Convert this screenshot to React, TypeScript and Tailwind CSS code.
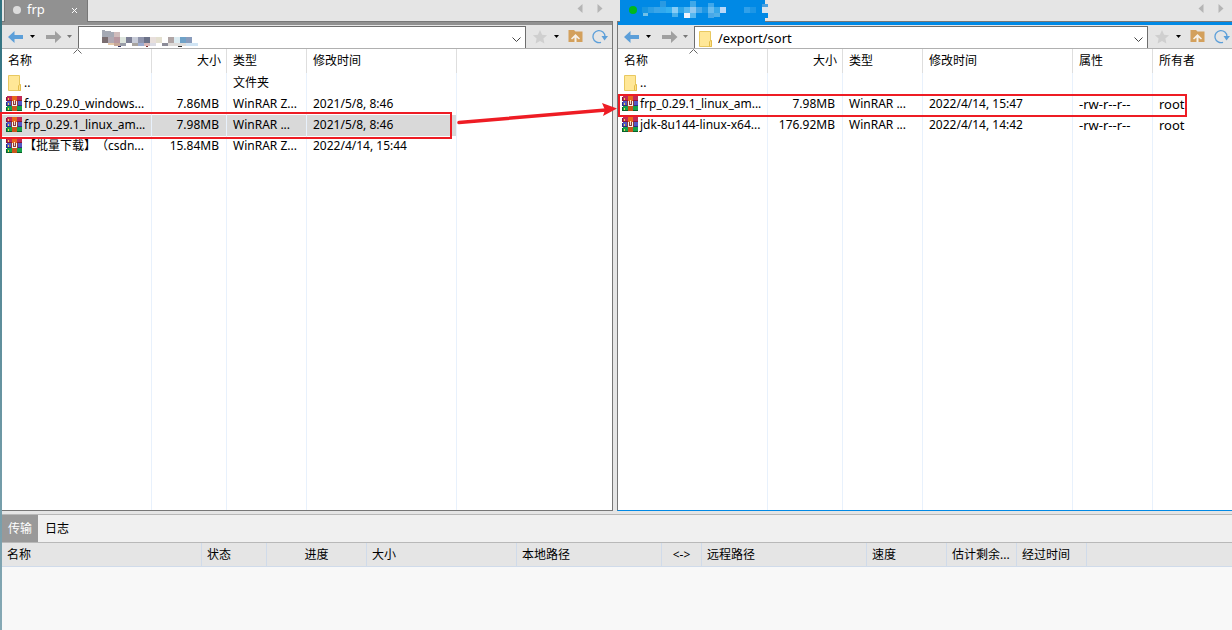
import clsx from "clsx";

interface FileRow {
    icon: "folder" | "archive"
    name: string
    size?: string
    type?: string
    modified?: string
    attrs?: string
    owner?: string
    selected?: boolean
}

type Block = [number, number, number, number, string];

const localFiles: FileRow[] = [
    { icon: "folder", name: "..", type: "文件夹" },
    { icon: "archive", name: "frp_0.29.0_windows...", size: "7.86MB", type: "WinRAR Z...", modified: "2021/5/8, 8:46" },
    { icon: "archive", name: "frp_0.29.1_linux_am...", size: "7.98MB", type: "WinRAR ...", modified: "2021/5/8, 8:46", selected: true },
    { icon: "archive", name: "【批量下载】（csdn...", size: "15.84MB", type: "WinRAR Z...", modified: "2022/4/14, 15:44" },
];

const remoteFiles: FileRow[] = [
    { icon: "folder", name: ".." },
    { icon: "archive", name: "frp_0.29.1_linux_am...", size: "7.98MB", type: "WinRAR ...", modified: "2022/4/14, 15:47", attrs: "-rw-r--r--", owner: "root" },
    { icon: "archive", name: "jdk-8u144-linux-x64...", size: "176.92MB", type: "WinRAR ...", modified: "2022/4/14, 14:42", attrs: "-rw-r--r--", owner: "root" },
];

const transferColumns = [
    { label: "名称", width: "w-[200px]" },
    { label: "状态", width: "w-[65px]" },
    { label: "进度", width: "w-[100px]", center: true },
    { label: "大小", width: "w-[150px]" },
    { label: "本地路径", width: "w-[145px]" },
    { label: "<->", width: "w-[40px]", center: true },
    { label: "远程路径", width: "w-[165px]" },
    { label: "速度", width: "w-[80px]" },
    { label: "估计剩余...", width: "w-[70px]" },
    { label: "经过时间", width: "w-[70px]" },
];

const pathBlocks: Block[] = [
    [0, 7, 6, 6, "#7a6d70"], [6, 7, 6, 6, "#b0a8b2"], [12, 7, 6, 6, "#b898a0"], [18, 7, 6, 6, "#dde5dd"],
    [24, 7, 6, 6, "#7c7f95"], [30, 7, 6, 6, "#c8ccd8"], [36, 7, 6, 6, "#9095ac"], [42, 7, 6, 6, "#6c7288"],
    [48, 7, 6, 6, "#e8dfdc"], [54, 7, 6, 6, "#e4e0d0"], [66, 7, 6, 6, "#b0a5a5"], [72, 7, 6, 6, "#dcecf2"],
    [78, 7, 6, 6, "#6fa2c8"], [84, 7, 6, 6, "#8a9cbc"], [6, 13, 6, 2, "#e4c8a8"], [12, 13, 6, 3, "#c8a898"],
    [18, 13, 6, 3, "#999da8"], [30, 13, 6, 3, "#a8a4a0"], [36, 13, 6, 3, "#9cabd0"], [42, 13, 6, 3, "#d8b8b8"],
    [48, 13, 6, 3, "#dcdce4"], [60, 13, 6, 3, "#8c8c98"], [66, 13, 18, 3, "#dedcda"], [84, 13, 12, 3, "#d0e4f4"],
    [16, 16, 3, 1, "#303060"], [44, 16, 2, 1, "#803030"], [76, 16, 4, 1, "#303030"],
];

const tabBlocks: Block[] = [
    [18, 0, 6, 6, "#2a9ae2"], [48, 0, 6, 6, "#40a8e8"], [66, 2, 6, 4, "#40a8ea"],
    [0, 6, 6, 6, "#1795e0"], [6, 6, 6, 6, "#2b9ee5"], [12, 6, 6, 6, "#3aa5e8"], [18, 6, 6, 6, "#30a8ee"],
    [24, 6, 6, 6, "#35b0f0"], [30, 6, 6, 6, "#88ccf5"], [36, 6, 6, 6, "#2ca5ea"], [42, 6, 6, 6, "#58b8f0"],
    [48, 6, 6, 6, "#90c8f0"], [54, 6, 6, 6, "#48a8e8"], [60, 6, 6, 6, "#1e96e4"], [66, 6, 6, 6, "#68bbee"],
    [72, 6, 6, 6, "#38a8ea"], [78, 6, 6, 6, "#b8d8f8"], [1, 12, 5, 3, "#70c0e8"], [30, 12, 6, 4, "#48b0ec"],
    [42, 12, 6, 5, "#f0f4fc"], [48, 12, 6, 5, "#58b8f0"], [66, 12, 6, 5, "#48a8e8"], [72, 12, 6, 4, "#50b0e8"],
    [102, 6, 6, 6, "#30a0ea"], [108, 6, 6, 6, "#1c96e6"],
    [120, 3, 6, 3, "#4aa0e0"], [120, 6, 6, 6, "#d8e4ee"], [123, 12, 3, 5, "#0089e5"],
];

function Blocks({ items }: { items: Block[] }) {
    return (
        <>
            {items.map(([x, y, w, h, fill]) => <rect key={`${x}-${y}`} x={x} y={y} width={w} height={h} fill={fill} />)}
        </>
    )
}

function ArchiveIcon() {
    return (
        <svg className="size-4 shrink-0" viewBox="0 0 16 16" shapeRendering="crispEdges" aria-hidden="true">
            <rect x="1" width="15" height="5" fill="#c22a55" />
            <rect y="1" width="1" height="4" fill="#8c1738" />
            <rect x="1" y="4" width="15" height="1" fill="#8c1738" />
            <rect x="1" y="5" width="15" height="5" fill="#5257c4" />
            <rect y="6" width="1" height="4" fill="#2c2f85" />
            <rect x="1" y="9" width="15" height="1" fill="#2c2f85" />
            <rect x="1" y="10" width="15" height="5" fill="#16a34a" />
            <rect y="11" width="1" height="4" fill="#0a6128" />
            <rect x="1" y="14" width="15" height="1" fill="#0a6128" />
            <path d="M2 2h1v2H2zM2 7h1v2H2zM2 12h1v2H2z" fill="#f3d34a" />
            <rect x="6" width="5" height="15" fill="#e8691c" />
            <rect x="6" y="10" width="5" height="5" fill="#c9561c" />
            <rect x="5" y="5" width="7" height="5" fill="#8a3a3c" />
            <path d="M6 5h1v4h3V5h1v5H6z" fill="#f8f4f0" />
            <rect x="8" y="4" width="1" height="4" fill="#f8e2c0" />
        </svg>
    )
}

function FolderIcon() {
    return (
        <svg className="size-4 shrink-0" viewBox="0 0 16 16" aria-hidden="true">
            <path d="M2.5.5h11v9.500h1v5.500h-12z" fill="#ffe797" stroke="#e8c860" />
            <path d="M12.500 15.500v-4.500l1-1.500h1v6z" fill="#ffe28a" stroke="#e3bd4c" />
        </svg>
    )
}

function Caret({ color }: { color: string }) {
    return (
        <svg className="h-[3px] w-[5px]" viewBox="0 0 5 3" aria-hidden="true">
            <path d="M0 0h5L2.500 3z" fill={color} />
        </svg>
    )
}

function HistoryArrow({ forward }: { forward?: boolean }) {
    return (
        <svg className="h-3 w-4" viewBox="0 0 16 12" aria-hidden="true">
            {forward
                ? <path d="M15.500 6L9 0v4H0v4h9v4z" fill="#a0a0a0" />
                : <path d="M0 6l6.500-6v4H15v4H6.500v4z" fill="#5c9fd9" />}
        </svg>
    )
}

function TabScroll() {
    return (
        <div className="ml-auto flex items-center gap-[14px] pr-[10px] pb-1">
            <button aria-label="上一个标签">
                <svg className="block h-[9px] w-[6px]" viewBox="0 0 6 9"><path d="M5.500 0v9L.5 4.500z" fill="#b5b5b5" /></svg>
            </button>
            <button aria-label="下一个标签">
                <svg className="block h-[9px] w-[6px]" viewBox="0 0 6 9"><path d="M.5 0v9l5-4.500z" fill="#b5b5b5" /></svg>
            </button>
        </div>
    )
}

function Toolbar({ path }: { path: string }) {
    return (
        <div className="flex h-6 items-center border-b border-[#b0b0b0] bg-[#e5e5e5] pl-[6px]">
            <button aria-label="后退"><HistoryArrow /></button>
            <button aria-label="后退历史" className="ml-[6px]"><Caret color="#000" /></button>
            <button aria-label="前进" className="ml-[11px]"><HistoryArrow forward /></button>
            <button aria-label="前进历史" className="mr-[6px] ml-[5px]"><Caret color="#777" /></button>
            <div className="mt-px flex h-[22px] min-w-0 flex-1 items-center self-start border-t border-r border-l border-[#6e6e6e] bg-white pt-[3px]">
                {path
                    ? <span className="pl-[2px]"><FolderIcon /></span>
                    : <svg className="ml-[23px] h-[18px] w-24" viewBox="0 0 96 18" shapeRendering="crispEdges">
                        <path d="M0 0l12 2v5H0z" fill="#a5a9b4" />
                        <path d="M12 2h6v5h-6z" fill="#d0bcbc" />
                        <Blocks items={pathBlocks} />
                    </svg>}
                <input aria-label="路径" defaultValue={path} className="h-[18px] min-w-0 flex-1 bg-transparent pl-[5px] text-[13px] outline-none" />
                <button aria-label="路径列表" className="mr-1">
                    <svg className="block h-[5px] w-[9px]" viewBox="0 0 9 5"><path d="M.5.5l4 4 4-4" fill="none" stroke="#444" /></svg>
                </button>
            </div>
            <div className="flex items-center pr-1">
                <button aria-label="收藏" className="ml-[6px]">
                    <svg className="block size-4" viewBox="0 0 16 16"><path d="M8 1l2.100 4.700 5 .5-3.700 3.400 1 5L8 12.100l-4.400 2.500 1-5L.9 6.200l5-.5z" fill="#cfcfcf" /></svg>
                </button>
                <button aria-label="收藏列表" className="ml-[6px]"><Caret color="#000" /></button>
                <button aria-label="上级目录" className="ml-[9px]">
                    <svg className="block h-4 w-[15px]" viewBox="0 0 15 16">
                        <path d="M.5 1H6l1.500 1.500h7V13H.5z" fill="#d3a05c" />
                        <path d="M7.500 5l4.500 4.500-1 1-2.500-2V13h-2V8.500l-2.500 2-1-1z" fill="#f7f1e8" />
                    </svg>
                </button>
                <button aria-label="刷新" className="ml-[9px]">
                    <svg className="block size-4" viewBox="0 0 16 16">
                        <path d="M9 13.300A6 6 0 1 1 13 7.500" fill="none" stroke="#5c9fd9" strokeWidth="1.300" />
                        <path d="M9.500 7H16l-3.500 4.500z" fill="#5c9fd9" />
                    </svg>
                </button>
            </div>
        </div>
    )
}

function FileTable({ rows, remote }: { rows: FileRow[], remote?: boolean }) {
    const line = "border-r border-[#e8f1fc]";
    const head = "h-6 border-r border-[#dedede] pl-[6px] text-left font-normal";
    return (
        <table className="size-full table-fixed border-separate border-spacing-0 bg-white text-xs whitespace-nowrap">
            <thead>
                <tr className="h-6">
                    <th className={clsx(head, "relative w-[150px]")}>
                        名称
                        <svg className="absolute top-0 left-[71px] h-[5px] w-[9px]" viewBox="0 0 9 5"><path d="M.5 4.500l4-4 4 4" fill="none" stroke="#666" /></svg>
                    </th>
                    <th className="h-6 w-[75px] border-r border-[#dedede] pr-[5px] text-right font-normal">大小</th>
                    <th className={clsx(head, "w-[80px]")}>类型</th>
                    <th className={clsx(head, "w-[150px]")}>修改时间</th>
                    {remote && <th className={clsx(head, "w-[80px]")}>属性</th>}
                    {remote ? <th className="pl-[6px] text-left font-normal">所有者</th> : <th></th>}
                </tr>
            </thead>
            <tbody>
                {rows.map((row) => {
                    const cell = clsx("h-[21px] align-top leading-5", line, row.selected && "bg-[#d9d9d9]");
                    return (
                        <tr key={row.name} className="h-[21px]">
                            <td className={clsx(cell, "pl-1")}>
                                <div className="flex h-5 items-center gap-[2px]">
                                    {row.icon === "folder" ? <FolderIcon /> : <ArchiveIcon />}
                                    <span className="[text-spacing-trim:space-all]">{row.name}</span>
                                </div>
                            </td>
                            <td className={clsx(cell, "pr-[7px] text-right")}>{row.size}</td>
                            <td className={clsx(cell, "pl-[6px]")}>{row.type}</td>
                            <td className={clsx(cell, "pl-[6px]")}>{row.modified}</td>
                            {remote && <td className={clsx(cell, "pl-[6px] text-[13px]")}>{row.attrs}</td>}
                            <td className="pl-[6px] align-top text-[13px] leading-5">{row.owner}</td>
                        </tr>
                    )
                })}
                <tr>
                    <td className={line}></td>
                    <td className={line}></td>
                    <td className={line}></td>
                    <td className={line}></td>
                    {remote && <td className={line}></td>}
                    <td></td>
                </tr>
            </tbody>
        </table>
    )
}

function LocalPanel() {
    return (
        <section className="flex min-w-0 flex-col">
            <div className="flex h-[21px] pl-[2px]">
                <div className="relative z-10 flex h-[22px] w-[84px] items-center border-r border-l border-[#777] bg-[#919191] pb-[2px] pl-2 text-white">
                    <span className="size-2 rounded-full bg-[#dcdcdc]"></span>
                    <button className="ml-[6px] text-[13px]">frp</button>
                    <button aria-label="关闭" className="ml-auto pr-[9px]">
                        <svg className="block size-[7px]" viewBox="0 0 7 7"><path d="M1 1l5 5M6 1L1 6" stroke="#fff" /></svg>
                    </button>
                </div>
                <TabScroll />
            </div>
            <div className="flex flex-1 flex-col border-t border-r border-b border-[#777]">
                <div className="h-[3px] bg-[#919191]"></div>
                <Toolbar path="" />
                <div className="grid flex-1">
                    <FileTable rows={localFiles} />
                </div>
            </div>
        </section>
    )
}

function RemotePanel() {
    return (
        <section className="-mr-[2px] flex min-w-0 flex-col">
            <div className="flex h-[21px] pl-[3px]">
                <button aria-label="远程会话" className="relative z-10 flex h-[22px] w-[145px] items-center bg-[#0089e5] pb-[2px] pl-[9px]">
                    <span className="size-2 shrink-0 rounded-full bg-[#00b81c]"></span>
                    <svg className="ml-[5px] h-[18px] w-[126px] shrink-0" viewBox="0 0 126 18" shapeRendering="crispEdges">
                        <Blocks items={tabBlocks} />
                    </svg>
                </button>
                <TabScroll />
            </div>
            <div className="flex flex-1 flex-col border-t border-b border-l border-t-[#777] border-b-[#0089e5] border-l-[#777]">
                <div className="h-[3px] bg-[#0089e5]"></div>
                <Toolbar path="/export/sort" />
                <div className="grid flex-1">
                    <FileTable rows={remoteFiles} remote />
                </div>
            </div>
        </section>
    )
}

function TransferPanel() {
    return (
        <section className="mt-[3px] border-t border-[#b8b8b8] bg-[#f8f8f8] text-xs">
            <div className="flex h-7 border-b border-[#b8b8b8] bg-[#f0f0f0]">
                <button className="bg-[#999] px-[6px] text-white">传输</button>
                <button className="px-[7px]">日志</button>
            </div>
            <table className="w-full table-fixed border-separate border-spacing-0 whitespace-nowrap">
                <thead>
                    <tr className="bg-[#e5e5e5]">
                        {transferColumns.map((col) => (
                            <th key={col.label} className={clsx("h-6 border-r border-b border-[#d0dbea] font-normal", col.width, col.center ? "text-center" : "pl-[5px] text-left")}>
                                {col.label}
                            </th>
                        ))}
                        <th className="border-b border-[#d0dbea]"></th>
                    </tr>
                </thead>
            </table>
            <div className="h-[63px]"></div>
        </section>
    )
}

export default function App() {
    return (
        <div className="relative flex h-screen overflow-hidden bg-[#e5e5e5] font-['Noto_Sans','Noto_Sans_CJK_SC',sans-serif] text-black">
            <div className="w-[2px] shrink-0 bg-linear-to-b from-[#2f7280] to-[#86a9b5]"></div>
            <main className="flex min-w-0 flex-1 flex-col">
                <div className="grid flex-1 grid-cols-[611fr_615fr] gap-1">
                    <LocalPanel />
                    <RemotePanel />
                </div>
                <TransferPanel />
            </main>
            {/* annotations drawn over both panels */}
            <div className="absolute top-[112px] left-0 h-[27px] w-[452px] border-2 border-[#ee1c24]"></div>
            <div className="absolute top-[94px] left-[618px] h-[23px] w-[569px] border-2 border-[#ee1c24]"></div>
            <svg className="absolute top-[98px] left-[456px] h-7 w-[162px]" viewBox="0 0 162 28">
                <path d="M3 24.500L150 12" stroke="#ee1c24" strokeWidth="3.500" strokeLinecap="round" />
                <path d="M161 10.500L146 5l3 7-2 6z" fill="#ee1c24" />
            </svg>
        </div>
    )
}
